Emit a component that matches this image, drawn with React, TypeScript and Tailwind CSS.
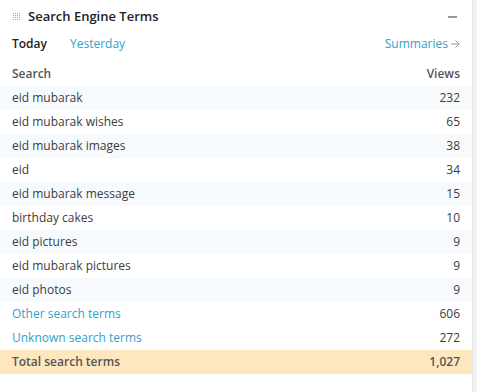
import React from "react";

const rows: [string, string][] = [
  ["eid mubarak", "232"],
  ["eid mubarak wishes", "65"],
  ["eid mubarak images", "38"],
  ["eid", "34"],
  ["eid mubarak message", "15"],
  ["birthday cakes", "10"],
  ["eid pictures", "9"],
  ["eid mubarak pictures", "9"],
  ["eid photos", "9"],
];

export default function App() {
  return (
    <div className="w-[477px] h-[392px] bg-[#f1f1f1] flex" style={{ fontFamily: '"Open Sans", "Noto Sans", sans-serif' }}>
      <div className="w-[473px] h-full bg-white border-r border-[#e5e5e5] flex flex-col text-[12px] text-[#3c3c3c]">
        <div className="h-[34px] flex items-center pl-[13px] pr-[15px]">
          <svg width="8" height="8" viewBox="0 0 8 8" className="mr-[7px]">
            {[0, 2, 4, 6].map((y) =>
              [0, 2, 4, 6].map((x) => <rect key={`${x}-${y}`} x={x} y={y} width="1" height="1" fill="#aaa" />)
            )}
          </svg>
          <span className="font-semibold text-[#222] text-[13px]">Search Engine Terms</span>
          <span className="ml-auto w-[9px] h-[2px] bg-[#999]" />
        </div>
        <div className="h-[20px] flex items-center px-[12px]">
          <span className="font-semibold text-[#222]">Today</span>
          <span className="ml-[23px] text-[#2ea2cc]">Yesterday</span>
          <span className="ml-auto text-[#2ea2cc] flex items-center">
            Summaries
            <svg width="9" height="8" viewBox="0 0 9 8" className="ml-[3px]">
              <path d="M0 4 H8 M4.5 0.5 L8 4 L4.5 7.5" stroke="#999" strokeWidth="1" fill="none" />
            </svg>
          </span>
        </div>
        <div className="h-[32px] pt-[8px] flex items-center px-[12px] font-semibold text-[#555]">
          <span>Search</span>
          <span className="ml-auto">Views</span>
        </div>
        {rows.map(([t, v], i) => (
          <div key={t} className={`h-[24px] flex items-center px-[12px] ${i % 2 === 0 ? "bg-[#f7fafc]" : "bg-white"}`}>
            <span>{t}</span>
            <span className="ml-auto">{v}</span>
          </div>
        ))}
        <div className="h-[24px] flex items-center px-[12px]">
          <span className="text-[#2ea2cc]">Other search terms</span>
          <span className="ml-auto">606</span>
        </div>
        <div className="h-[24px] flex items-center px-[12px]">
          <span className="text-[#2ea2cc]">Unknown search terms</span>
          <span className="ml-auto">272</span>
        </div>
        <div className="h-[24px] flex items-center px-[12px] bg-[#fee7bf] font-semibold text-[#555]">
          <span>Total search terms</span>
          <span className="ml-auto">1,027</span>
        </div>
      </div>
    </div>
  );
}
